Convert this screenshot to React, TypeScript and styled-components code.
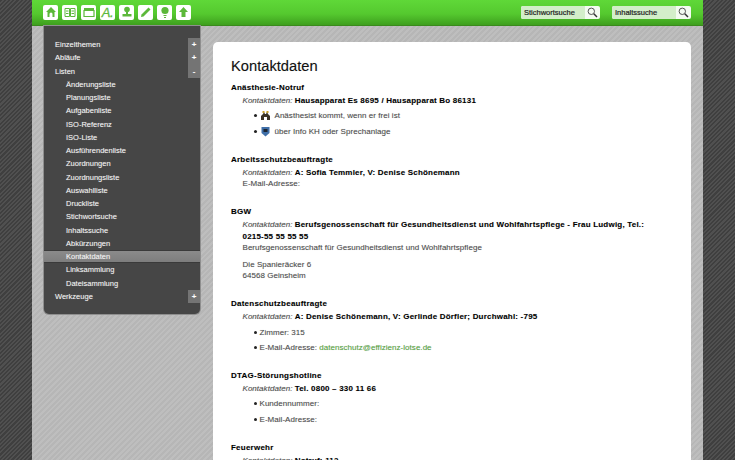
import React from "react";
import styled, { createGlobalStyle } from "styled-components";

const Global = createGlobalStyle`
  html, body { margin: 0; padding: 0; height: 460px; overflow: hidden; background: #474747; }
  body { font-family: "Liberation Sans", Arial, sans-serif; }
  * { box-sizing: border-box; }
`;

const Page = styled.div`
  width: 735px; height: 460px; overflow: hidden; padding: 0 32px;
  background: repeating-linear-gradient(135deg, #3f3f3f 0 1.500px, #505050 1.500px 3px);
`;
const Shell = styled.div`
  width: 671px; height: 460px; display: flex; flex-direction: column;
  background: repeating-linear-gradient(135deg, #b6b6b6 0 2px, #bebebe 2px 4px);
`;
const Header = styled.header`
  height: 26px; flex: none; display: flex; align-items: center; padding: 0 12px 1px 11px;
  background: linear-gradient(#5fd838 0%, #55c92f 55%, #3e9f1e 100%);
  border-bottom: 1px solid #3a8a1c;
`;
const Tools = styled.nav`display: flex; gap: 4px;`;
const Tool = styled.div`
  width: 15px; height: 15px; border-radius: 2px; background: #fff;
  display: flex; align-items: center; justify-content: center;
  svg { display: block; }
`;
const ToolLetter = styled(Tool)`
  color: #5cb83a; font-size: 13px; line-height: 15px; font-style: italic; letter-spacing: -.5px;
  font-weight: 400; -webkit-text-stroke: .3px #5cb83a;
`;
const SearchGroup = styled.div`display: flex; gap: 12px; margin-left: auto;`;
const Search = styled.div`
  width: 79px; height: 13px; display: flex; border-radius: 2px; overflow: hidden; background: #f4fbf1;
`;
const SearchLabel = styled.div`
  flex: 1; background: #d3eec9; color: #222; font-size: 7.500px;
  line-height: 13px; padding-left: 3px; -webkit-text-stroke: .2px #222;
`;
const SearchBtn = styled.div`
  width: 15px; display: flex; align-items: center; justify-content: center;
`;
const Main = styled.div`
  flex: 1; min-height: 0; display: flex; align-items: flex-start; padding: 0 12px; gap: 13px;
`;
const Side = styled.aside`
  width: 156px; flex: none; height: 288px; padding-top: 12px; background: #464646;
  border-radius: 0 0 5px 5px; box-shadow: 0 0 0 1px #8f8f8f;
  text-shadow: 0 0 1px rgba(255, 255, 255, .35);
`;
const Row = styled.div<{ $sub?: boolean; $active?: boolean }>`
  height: 13.260px; display: flex; align-items: center; justify-content: space-between;
  padding-left: ${p => (p.$sub ? 22 : 11)}px;
  color: #f4f4f4; font-size: 7.500px;
  background: ${p => (p.$active ? "linear-gradient(#8c8c8c, #7c7c7c)" : "transparent")};
  box-shadow: ${p => (p.$active ? "inset 0 1px 0 #3a3a3a, inset 0 -1px 0 #3a3a3a" : "none")};
`;
const Toggle = styled.span`
  width: 12px; height: 13.260px; background: #747474; color: #fff; font-size: 8px; font-weight: 700;
  display: flex; align-items: center; justify-content: center;
`;
const Card = styled.main`
  width: 478px; flex: none; margin-top: 16px; height: 430px; padding: 14px 18px 0;
  background: #fff; border-radius: 5px 5px 0 0; overflow: hidden; color: #4a4a4a; font-size: 8px;
  letter-spacing: .04px; text-shadow: 0 0 1px rgba(0, 0, 0, .2);
`;
const Title = styled.h1`
  margin: 0 0 4.700px; font-size: 14.700px; line-height: 20px; font-weight: 400; color: #111; letter-spacing: 0;
`;
const Section = styled.section`margin-bottom: 15px;`;
const Name = styled.h2`
  margin: 0; font-size: 8px; line-height: 14px; font-weight: 700; color: #000; letter-spacing: .23px;
`;
const Body = styled.div`padding-left: 11.500px;`;
const Line = styled.div`line-height: 11.700px;`;
const Label = styled.em`color: #4a4a4a;`;
const Strong = styled.strong`color: #000; letter-spacing: .2px;`;
const NoBreak = styled.span`white-space: nowrap;`;
const Gap = styled.div`height: 4.500px;`;
const List = styled.ul`margin: 1.750px 0 -1.500px; padding: 0 0 0 17px; list-style: none;`;
const Item = styled.li`
  position: relative; height: 15.500px; line-height: 15.500px; display: flex; align-items: center; gap: 4px;
  &::before { content: ""; position: absolute; left: -6px; top: 6px; width: 3px; height: 3px; border-radius: 50%; background: #222; }
`;
const Glyph = styled.svg`width: 11px; height: 11px; flex: none;`;
const Mail = styled.a`color: #53a53a; text-decoration: none;`;

const G = "#5cb83a";
const s = { fill: "none", stroke: G, strokeWidth: 1.5 };
const HomeIcon = () => <svg width="12" height="12" viewBox="0 0 12 12"><path fillRule="evenodd" d="M6 1 1 6h1.500v5h7V6H11zM4.500 11V8a1.500 1.500 0 0 1 3 0v3z" fill={G} /></svg>;
const BookIcon = () => <svg width="12" height="11" viewBox="0 0 12 11"><path d="M1 1.500h4.500v8H1zM6.500 1.500H11v8H6.500zM2 4h2.500M2 6.500h2.500M7.500 4H10M7.500 6.500H10" {...s} strokeWidth={1} /></svg>;
const FolderIcon = () => <svg width="12" height="11" viewBox="0 0 12 11"><path d="M1 1h10v3H1z" fill={G} /><path d="M1 3.500h10v6H1z" {...s} strokeWidth={1.200} /></svg>;
const PersonIcon = () => <svg width="12" height="12" viewBox="0 0 12 12"><circle cx="6" cy="3.500" r="2.800" fill={G} /><path d="M5 6h2v2h3.500v2h-9V8H5zM1.500 10.500h9V11h-9z" fill={G} /></svg>;
const PencilIcon = () => <svg width="12" height="12" viewBox="0 0 12 12"><path d="M1 11 1.500 8.500 8.500 1.500l2 2-7 7z" fill={G} /></svg>;
const BulbIcon = () => <svg width="10" height="13" viewBox="0 0 10 13"><circle cx="5" cy="4.500" r="3.600" fill={G} /><path d="M3.500 9h3v1h-3zM4 11h2v1H4z" fill={G} /></svg>;
const ArrowIcon = () => <svg width="11" height="12" viewBox="0 0 11 12"><path d="M5.500 1 10 6H7.500v5h-4V6H1z" fill={G} /></svg>;

const Lens = () => (
  <svg width="11" height="11" viewBox="0 0 11 11"><circle cx="4.300" cy="4.300" r="3.200" fill="none" stroke="#444" strokeWidth=".9" /><path d="m6.800 6.800 3.200 3.200" stroke="#333" strokeWidth="1.500" /></svg>
);

const nav: [string, boolean, string?, boolean?][] = [
  ["Einzelthemen", false, "+"], ["Abläufe", false, "+"], ["Listen", false, "-"],
  ["Änderungsliste", true], ["Planungsliste", true], ["Aufgabenliste", true], ["ISO-Referenz", true],
  ["ISO-Liste", true], ["Ausführendenliste", true], ["Zuordnungen", true], ["Zuordnungsliste", true],
  ["Auswahlliste", true], ["Druckliste", true], ["Stichwortsuche", true], ["Inhaltssuche", true],
  ["Abkürzungen", true], ["Kontaktdaten", true, undefined, true], ["Linksammlung", true], ["Dateisammlung", true],
  ["Werkzeuge", false, "+"],
];

export default function App() {
  return (
    <Page>
      <Global />
      <Shell>
        <Header>
          <Tools>
            <Tool><HomeIcon /></Tool>
            <Tool><BookIcon /></Tool>
            <Tool><FolderIcon /></Tool>
            <ToolLetter>A.</ToolLetter>
            <Tool><PersonIcon /></Tool>
            <Tool><PencilIcon /></Tool>
            <Tool><BulbIcon /></Tool>
            <Tool><ArrowIcon /></Tool>
          </Tools>
          <SearchGroup>
            <Search><SearchLabel>Stichwortsuche</SearchLabel><SearchBtn><Lens /></SearchBtn></Search>
            <Search><SearchLabel>Inhaltssuche</SearchLabel><SearchBtn><Lens /></SearchBtn></Search>
          </SearchGroup>
        </Header>
        <Main>
          <Side>
            {nav.map(([t, sub, tg, act]) => (
              <Row key={t} $sub={sub} $active={act}>{t}{tg && <Toggle>{tg}</Toggle>}</Row>
            ))}
          </Side>
          <Card>
            <Title>Kontaktdaten</Title>
            <Section>
              <Name>Anästhesie-Notruf</Name>
              <Body>
                <Line><Label>Kontaktdaten:</Label> <Strong>Hausapparat Es 8695 / Hausapparat Bo 86131</Strong></Line>
                <List>
                  <Item>
                    <Glyph viewBox="0 0 11 11"><path d="M1 10V6l2-2 1-2 1 2h1l1-2 1 2 2 2v4H7V7H4v3z" fill="#3b3326" /><path d="M2.500 1h2v2h-2zM6.500 1h2v2h-2z" fill="#c9a22c" /></Glyph>
                    Anästhesist kommt, wenn er frei ist
                  </Item>
                  <Item>
                    <Glyph viewBox="0 0 11 11"><path d="M1.500 1h8v6L5.500 10.500 1.500 7z" fill="#3f6fa8" /><path d="M3.500 3h4v3h-4z" fill="#1c2430" /></Glyph>
                    über Info KH oder Sprechanlage
                  </Item>
                </List>
              </Body>
            </Section>
            <Section>
              <Name>Arbeitsschutzbeauftragte</Name>
              <Body>
                <Line><Label>Kontaktdaten:</Label> <Strong>A: Sofia Temmler, V: Denise Schönemann</Strong></Line>
                <Line>E-Mail-Adresse:</Line>
              </Body>
            </Section>
            <Section>
              <Name>BGW</Name>
              <Body>
                <Line><Label>Kontaktdaten:</Label> <Strong>Berufsgenossenschaft für Gesundheitsdienst und Wohlfahrtspflege - Frau Ludwig, Tel.: <NoBreak>0215-55 55 55 55</NoBreak></Strong></Line>
                <Line>Berufsgenossenschaft für Gesundheitsdienst und Wohlfahrtspflege</Line>
                <Gap />
                <Line>Die Spanieräcker 6</Line>
                <Line>64568 Geinsheim</Line>
              </Body>
            </Section>
            <Section>
              <Name>Datenschutzbeauftragte</Name>
              <Body>
                <Line><Label>Kontaktdaten:</Label> <Strong>A: Denise Schönemann, V: Gerlinde Dörfler; Durchwahl: -795</Strong></Line>
                <List>
                  <Item>Zimmer: 315</Item>
                  <Item><span>E-Mail-Adresse: <Mail>datenschutz@effizienz-lotse.de</Mail></span></Item>
                </List>
              </Body>
            </Section>
            <Section>
              <Name>DTAG-Störungshotline</Name>
              <Body>
                <Line><Label>Kontaktdaten:</Label> <Strong>Tel. 0800 – 330 11 66</Strong></Line>
                <List>
                  <Item>Kundennummer:</Item>
                  <Item>E-Mail-Adresse:</Item>
                </List>
              </Body>
            </Section>
            <Section>
              <Name>Feuerwehr</Name>
              <Body>
                <Line><Label>Kontaktdaten:</Label> <Strong>Notruf: 112</Strong></Line>
              </Body>
            </Section>
          </Card>
        </Main>
      </Shell>
    </Page>
  );
}
